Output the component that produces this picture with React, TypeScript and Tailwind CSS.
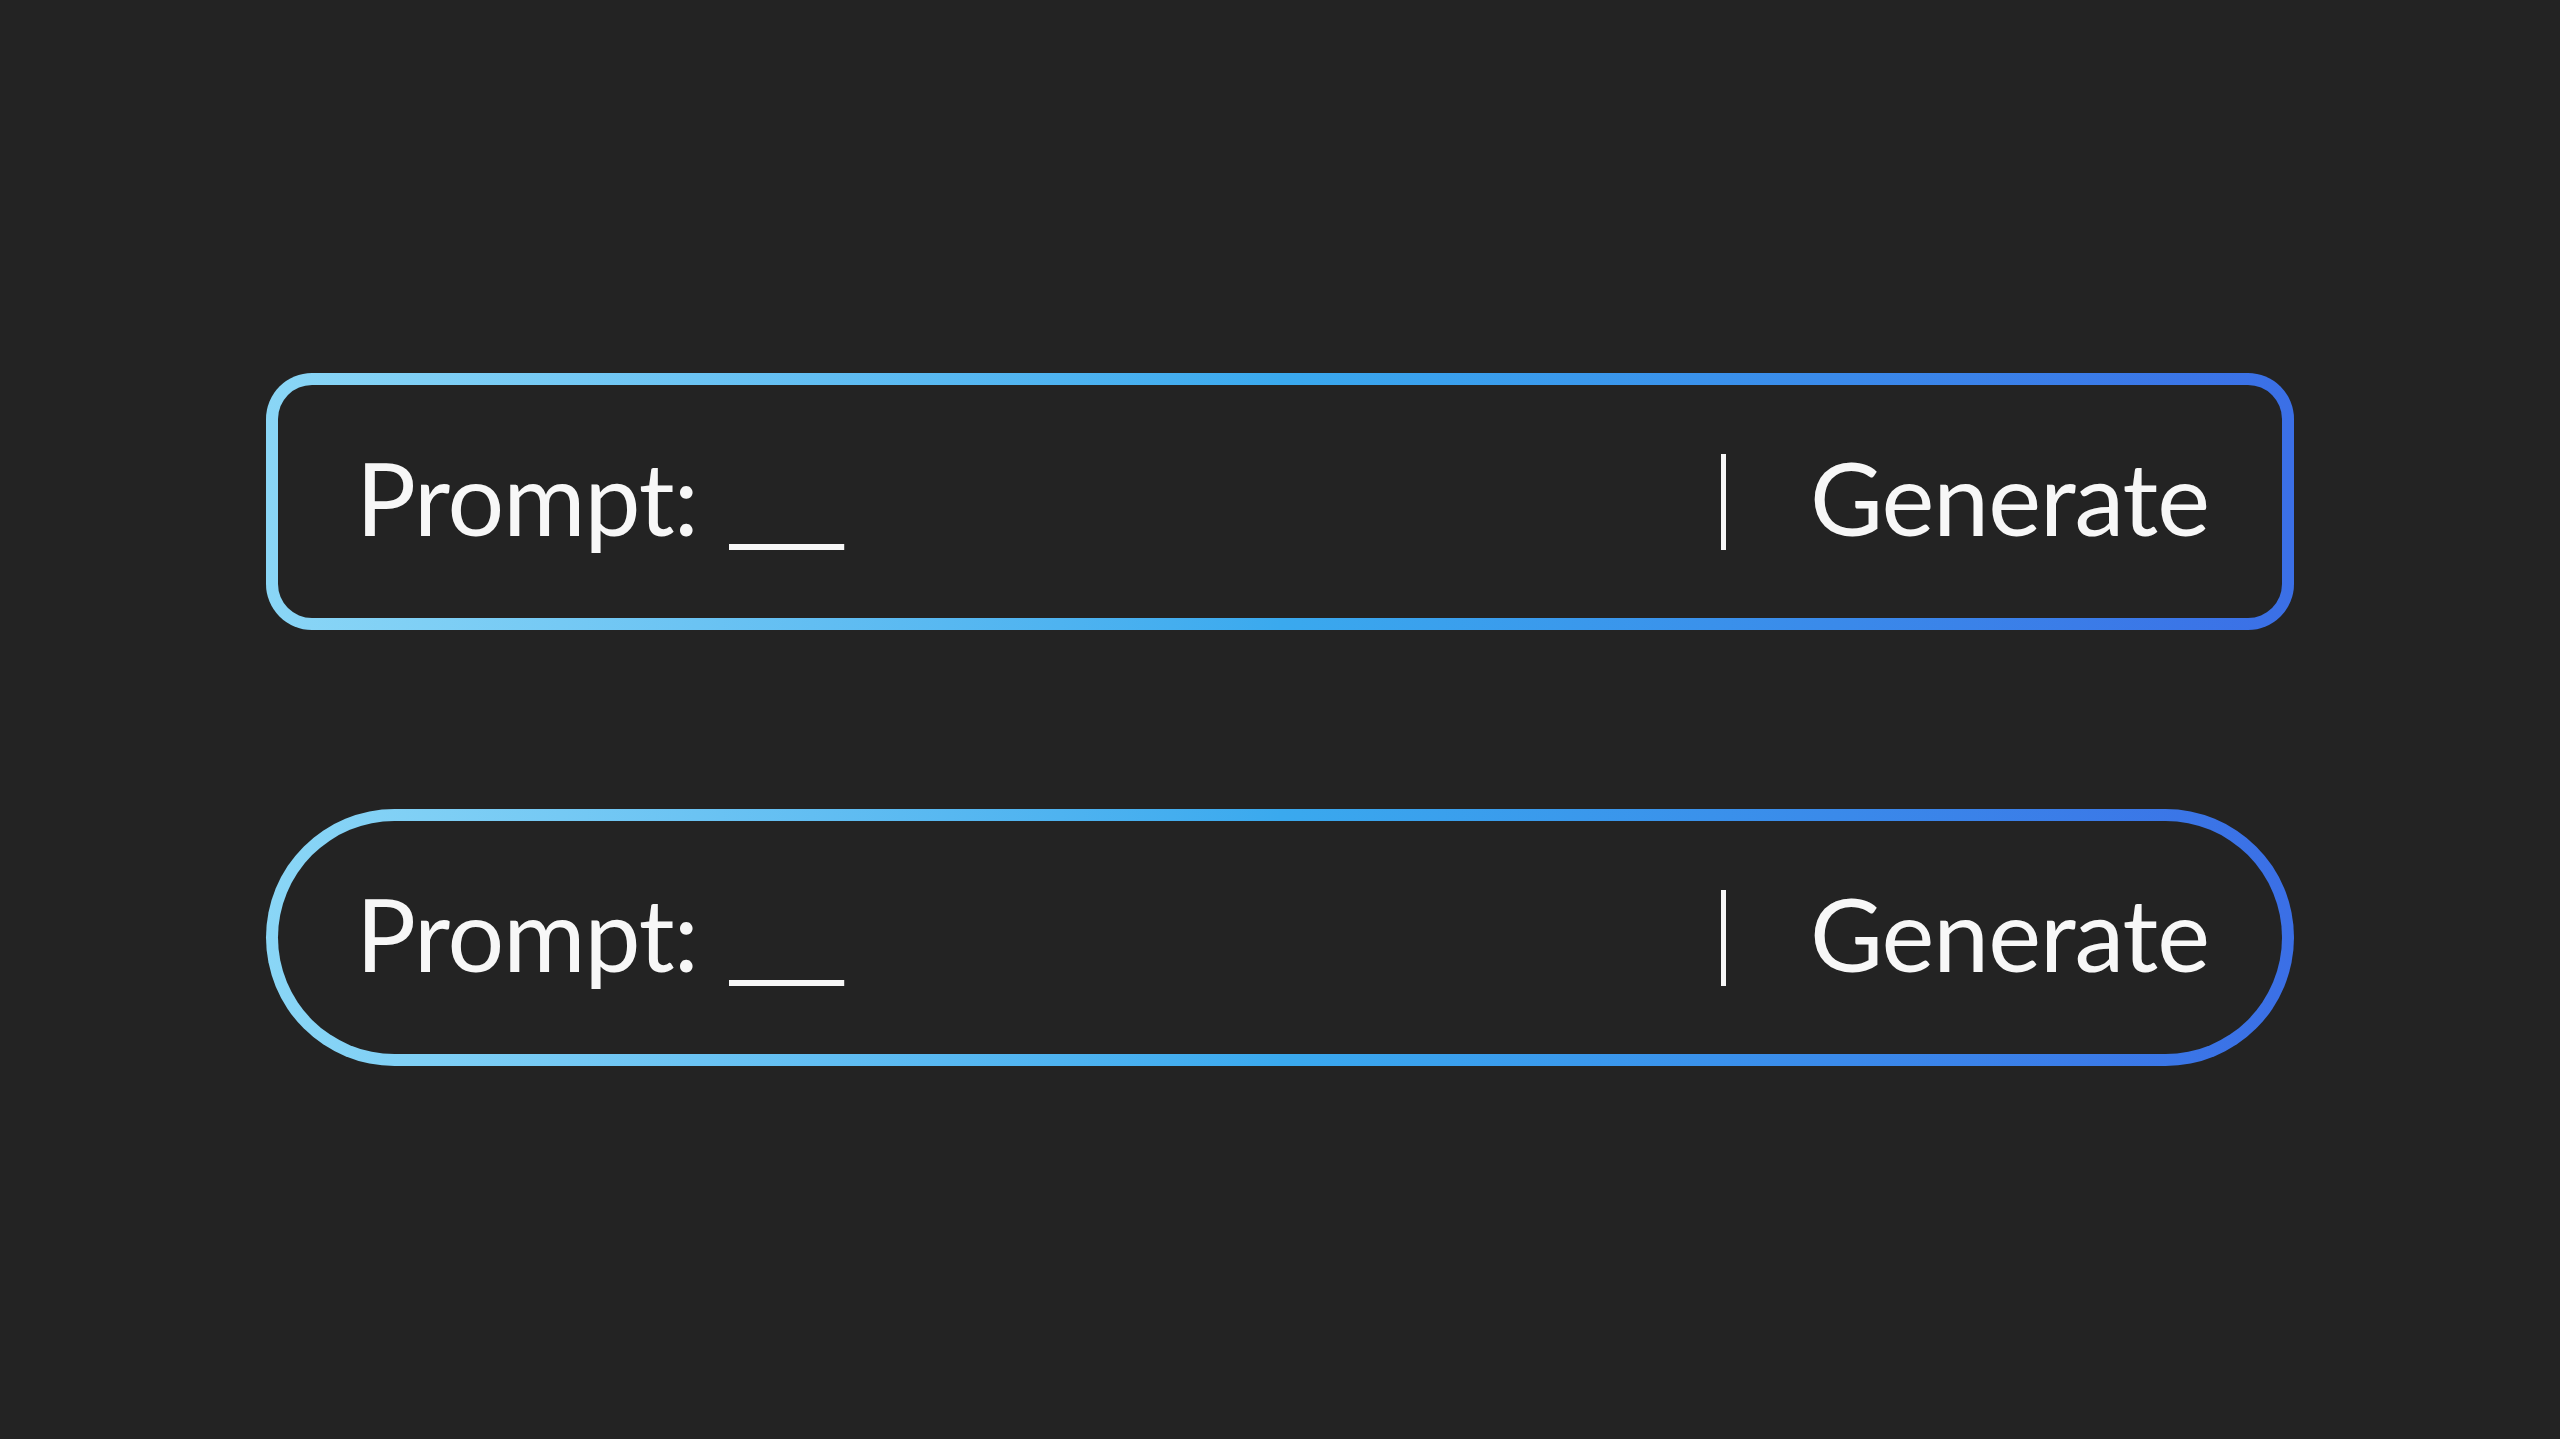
const PromptBar = ({ rounded }: { rounded: "box" | "pill" }) => {
  const outer = rounded === "pill" ? "rounded-full" : "rounded-[46px]";
  const inner = rounded === "pill" ? "rounded-full" : "rounded-[34px]";

  return (
    <div className={`w-[2028px] h-[257px] p-[12px] bg-gradient-to-r from-[#8ad6f6] via-[#3aa9ee] to-[#3b6fe6] ${outer}`}>
      <div className={`h-full w-full bg-[#232323] flex items-center pl-[78px] pr-[73px] pb-[10px] ${inner}`}>
        {/* Prompt label */}
        <div className="flex items-baseline gap-[28px] text-[#f7f7f7] text-[100px] leading-none font-['Lato',sans-serif]">
          <span className="tracking-[-1px]">Prompt:</span>
          <span className="tracking-[-8px]">___</span>
        </div>

        <div className="flex-1" />

        {/* Divider + action */}
        <div className="flex items-center gap-[84px]">
          <div className="w-[5px] h-[96px] bg-[#f7f7f7] mt-[10px]" />
          <span className="text-[#f7f7f7] text-[100px] leading-none font-['Lato',sans-serif] tracking-[-1px]">
            Generate
          </span>
        </div>
      </div>
    </div>
  );
};

export default function App() {
  return (
    <div className="min-h-screen w-full bg-[#232323] flex flex-col items-center justify-center gap-[179px]">
      <PromptBar rounded="box" />
      <PromptBar rounded="pill" />
    </div>
  );
}
